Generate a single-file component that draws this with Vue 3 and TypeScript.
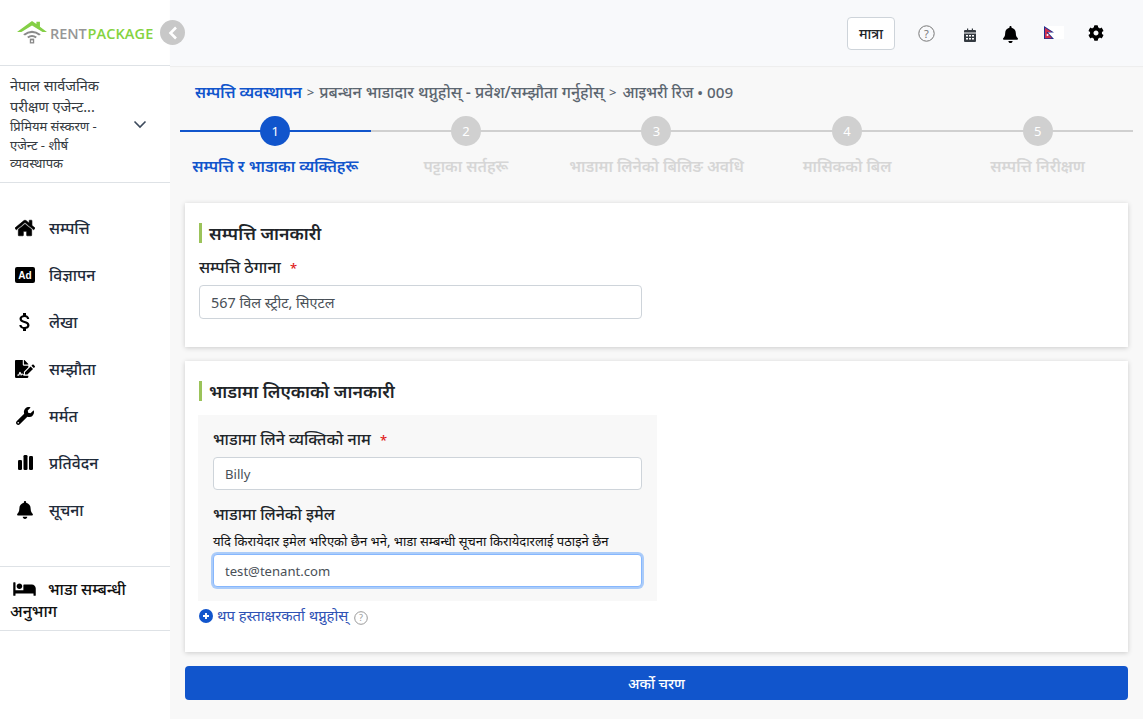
<script setup lang="ts">
const navItems = [
  { label: 'सम्पत्ति', icon: 'home' },
  { label: 'विज्ञापन', icon: 'ad' },
  { label: 'लेखा', icon: 'dollar' },
  { label: 'सम्झौता', icon: 'sign' },
  { label: 'मर्मत', icon: 'wrench' },
  { label: 'प्रतिवेदन', icon: 'chart' },
  { label: 'सूचना', icon: 'bell' },
]
const steps = [
  { n: 1, label: 'सम्पत्ति र भाडाका व्यक्तिहरू', active: true },
  { n: 2, label: 'पट्टाका सर्तहरू', active: false },
  { n: 3, label: 'भाडामा लिनेको बिलिङ अवधि', active: false },
  { n: 4, label: 'मासिकको बिल', active: false },
  { n: 5, label: 'सम्पत्ति निरीक्षण', active: false },
]
const bellPath = 'M224 512c35.32 0 63.97-28.65 63.97-64H160.03c0 35.35 28.65 64 63.97 64zm215.39-149.71c-19.32-20.76-55.47-51.99-55.47-154.29 0-77.7-54.48-139.9-127.94-155.16V32c0-17.67-14.32-32-31.98-32s-31.98 14.33-31.98 32v20.84C118.56 68.1 64.08 130.3 64.08 208c0 102.3-36.15 133.53-55.47 154.29-6 6.45-8.66 14.16-8.61 21.71.11 16.4 12.98 32 32.1 32h383.8c19.12 0 32-15.6 32.1-32 .05-7.55-2.61-15.27-8.61-21.71z'
</script>

<template>
  <div class="app">
    <aside class="sidebar">
      <div class="logo-row">
        <svg class="logo-icon" width="30" height="26" viewBox="0 0 34 27">
          <path d="M0 13.500 L17 1 L22 4.500 V2 H26 V7.500 L34 13.500 H29 L17 6 L5 13.500 Z" fill="#84cf46" />
          <path d="M7 16 Q17 8 27 16 L25 17.500 Q17 12 9 17.500 Z" fill="#8a8a8a" />
          <path d="M11.500 19 Q17 15 22.500 19 L21 20.500 Q17 18 13 20.500 Z" fill="#8a8a8a" />
          <rect x="14.500" y="21" width="5" height="5.500" fill="#8a8a8a" />
          <rect x="16" y="23" width="2" height="2" fill="#fff" />
        </svg>
        <span class="logo-text"><span class="rent">RENT</span><span class="package">PACKAGE</span></span>
      </div>
      <button class="collapse" aria-label="collapse">
        <svg width="10" height="14" viewBox="0 0 10 14"><path d="M8 1.500 L2.500 7 L8 12.500" fill="none" stroke="#fff" stroke-width="2.600" /></svg>
      </button>
      <div class="account">
        <div class="account-text">
          <div class="org">नेपाल सार्वजनिक परीक्षण एजेन्ट...</div>
          <div class="plan">प्रिमियम संस्करण - एजेन्ट - शीर्ष व्यवस्थापक</div>
        </div>
        <svg class="chev" width="14" height="9" viewBox="0 0 14 9"><path d="M1.500 1.500 L7 7 L12.500 1.500" fill="none" stroke="#3c4a5c" stroke-width="1.600" /></svg>
      </div>
      <nav class="nav">
        <div v-for="item in navItems" :key="item.label" class="nav-item">
          <span class="nav-icon">
            <svg v-if="item.icon === 'home'" width="20" height="18" viewBox="0 0 576 512"><path d="M280.37 148.26L96 300.11V464a16 16 0 0 0 16 16l112.06-.29a16 16 0 0 0 15.92-16V368a16 16 0 0 1 16-16h64a16 16 0 0 1 16 16v95.64a16 16 0 0 0 16 16.05L464 480a16 16 0 0 0 16-16V300L295.67 148.26a12.19 12.19 0 0 0-15.3 0zM571.6 251.47L488 182.56V44.05a12 12 0 0 0-12-12h-56a12 12 0 0 0-12 12v72.61L318.47 43a48 48 0 0 0-61 0L4.34 251.47a12 12 0 0 0-1.6 16.9l25.5 31A12 12 0 0 0 45.15 301l235.22-193.74a12.19 12.19 0 0 1 15.3 0L530.9 301a12 12 0 0 0 16.9-1.6l25.5-31a12 12 0 0 0-1.7-16.93z" fill="#000" stroke="#000" stroke-width="18" /></svg>
            <svg v-else-if="item.icon === 'ad'" width="20" height="16" viewBox="0 0 20 16"><rect width="20" height="16" rx="2" fill="#000" /><text x="10" y="11.700" text-anchor="middle" class="ad-text">Ad</text></svg>
            <svg v-else-if="item.icon === 'dollar'" width="24" height="24" viewBox="0 0 24 24"><path d="M11.800 10.900c-2.270-.59-3-1.200-3-2.150 0-1.090 1.010-1.850 2.700-1.850 1.780 0 2.440.85 2.500 2.100h2.210c-.07-1.720-1.120-3.300-3.210-3.810V3h-3v2.160c-1.940.42-3.500 1.680-3.500 3.610 0 2.310 1.910 3.460 4.700 4.130 2.500.6 3 1.480 3 2.410 0 .69-.49 1.790-2.700 1.790-2.060 0-2.870-.92-2.980-2.100h-2.200c.12 2.190 1.760 3.420 3.680 3.830V21h3v-2.150c1.950-.37 3.500-1.500 3.500-3.550 0-2.840-2.430-3.810-4.700-4.400z" fill="#000" /></svg>
            <svg v-else-if="item.icon === 'sign'" width="20" height="18" viewBox="0 0 576 512"><path d="M218.170 424.140c-2.950-5.920-8.090-6.520-10.170-6.520s-7.220.59-10.020 6.190l-7.670 15.340c-6.370 12.780-25.030 11.370-29.480-2.090L144 386.590l-10.610 31.880c-5.890 17.660-22.380 29.530-41 29.530H80c-8.840 0-16-7.160-16-16s7.160-16 16-16h12.390c4.830 0 9.110-3.080 10.640-7.660l18.190-54.640c3.300-9.810 12.440-16.410 22.780-16.410s19.480 6.590 22.770 16.410l13.880 41.640c19.750-16.190 54.060-9.700 66 14.160 1.890 3.780 5.490 5.950 9.360 6.260v-82.120l128-127.090V160H248c-13.200 0-24-10.800-24-24V0H24C10.700 0 0 10.700 0 24v464c0 13.300 10.700 24 24 24h336c13.300 0 24-10.700 24-24v-40l-128-.11c-16.120-.31-30.580-9.280-37.830-23.750zM384 121.900c0-6.300-2.500-12.400-7-16.900L279.100 7c-4.500-4.500-10.600-7-17-7H256v128h128v-6.100zm-96 225.060V416h68.990l161.680-162.780-67.880-67.880L288 346.960zm280.540-179.630l-31.870-31.870c-9.940-9.940-26.070-9.940-36.010 0l-27.250 27.250 67.880 67.880 27.250-27.250c9.950-9.950 9.950-26.070 0-36.010z" fill="#000" /></svg>
            <svg v-else-if="item.icon === 'wrench'" width="18" height="18" viewBox="0 0 512 512"><path d="M507.730 109.100c-2.240-9.030-13.540-12.090-20.120-5.510l-74.360 74.360-67.880-11.310-11.310-67.880 74.360-74.360c6.620-6.620 3.430-17.900-5.660-20.160-47.380-11.740-99.550.91-136.580 37.930-39.640 39.640-50.550 97.100-34.050 147.200L18.740 402.760c-24.990 24.990-24.990 65.510 0 90.500 24.990 24.990 65.510 24.990 90.500 0l213.210-213.210c50.120 16.710 107.470 5.680 147.370-34.220 37.070-37.070 49.700-89.320 37.910-136.730zM64 472c-13.250 0-24-10.750-24-24 0-13.260 10.750-24 24-24s24 10.740 24 24c0 13.250-10.750 24-24 24z" fill="#000" /></svg>
            <svg v-else-if="item.icon === 'chart'" width="15" height="15" viewBox="0 0 15 15"><rect x="0" y="5" width="4" height="10" rx="1.300" fill="#000" /><rect x="5.500" y="0" width="4" height="15" rx="1.300" fill="#000" /><rect x="11" y="1" width="4" height="14" rx="1.300" fill="#000" /></svg>
            <svg v-else width="16" height="18" viewBox="0 0 448 512"><path :d="bellPath" fill="#000" /></svg>
          </span>
          <span class="nav-label">{{ item.label }}</span>
        </div>
      </nav>
      <div class="rental">
        <svg class="bed" width="23" height="18" viewBox="0 0 640 512"><path d="M176 256c44.110 0 80-35.890 80-80s-35.890-80-80-80-80 35.890-80 80 35.890 80 80 80zm352-128H304c-8.840 0-16 7.160-16 16v144H64V80c0-8.840-7.160-16-16-16H16C7.160 64 0 71.160 0 80v352c0 8.840 7.160 16 16 16h32c8.840 0 16-7.160 16-16v-48h512v48c0 8.840 7.160 16 16 16h32c8.840 0 16-7.160 16-16V240c0-61.860-50.140-112-112-112z" fill="#000" /></svg>
        <span class="rental-label">भाडा सम्बन्धी अनुभाग</span>
      </div>
    </aside>

    <main class="main">
      <header class="topbar">
        <button class="trip">मात्रा</button>
        <svg class="help-top" width="17" height="17" viewBox="0 0 17 17"><circle cx="8.500" cy="8.500" r="7.700" fill="none" stroke="#777" stroke-width="1" /><text x="8.500" y="12.500" text-anchor="middle" class="q">?</text></svg>
        <svg class="cal" width="12" height="14" viewBox="0 0 12 14"><path d="M1 2 H3 V0.500 H4.200 V2 H7.800 V0.500 H9 V2 H11 A1 1 0 0 1 12 3 V4.500 H0 V3 A1 1 0 0 1 1 2 Z M0 5.500 H12 V13 A1 1 0 0 1 11 14 H1 A1 1 0 0 1 0 13 Z" fill="#343a40" /><path d="M2 7 H4 V8.500 H2 Z M5 7 H7 V8.500 H5 Z M8 7 H10 V8.500 H8 Z M2 10 H4 V11.500 H2 Z M5 10 H7 V11.500 H5 Z M8 10 H10 V11.500 H8 Z" fill="#fff" /></svg>
        <svg class="bell-top" width="15" height="17" viewBox="0 0 448 512"><path :d="bellPath" fill="#000" /></svg>
        <svg class="flag" width="20" height="13" viewBox="0 0 20 13"><rect width="20" height="13" fill="#fff" /><path d="M0 0 L10 6.500 H4 L10 13 H0 Z" fill="#1f2f8f" /><path d="M1 1.800 L7.500 6 H2.500 L8 12.200 H1 Z" fill="#cf2f4f" /><circle cx="3.500" cy="9" r="1" fill="#fff" /></svg>
        <svg class="gear" width="16" height="16" viewBox="0 0 512 512"><path d="M487.400 315.700l-42.600-24.600c4.300-23.200 4.300-47 0-70.200l42.600-24.600c4.900-2.800 7.100-8.600 5.500-14-11.100-35.600-30-67.800-54.700-94.600-3.800-4.100-10-5.100-14.800-2.300L380.800 110c-17.900-15.400-38.500-27.300-60.800-35.100V25.800c0-5.600-3.900-10.500-9.400-11.700-36.700-8.200-74.300-7.800-109.200 0-5.500 1.200-9.400 6.100-9.400 11.700V75c-22.200 7.900-42.800 19.800-60.800 35.100L88.700 85.500c-4.900-2.800-11-1.900-14.800 2.300-24.700 26.700-43.600 58.900-54.700 94.600-1.700 5.400.6 11.200 5.500 14L67.300 221c-4.300 23.200-4.300 47 0 70.200l-42.600 24.600c-4.900 2.800-7.100 8.600-5.500 14 11.100 35.600 30 67.800 54.700 94.600 3.800 4.100 10 5.100 14.800 2.300l42.600-24.600c17.900 15.400 38.500 27.300 60.800 35.100v49.200c0 5.600 3.900 10.500 9.400 11.700 36.700 8.200 74.300 7.800 109.200 0 5.500-1.200 9.400-6.100 9.400-11.700v-49.200c22.200-7.900 42.800-19.800 60.800-35.100l42.600 24.600c4.900 2.800 11 1.900 14.800-2.300 24.700-26.700 43.600-58.900 54.700-94.600 1.500-5.500-.7-11.300-5.600-14.100zM256 336c-44.100 0-80-35.900-80-80s35.900-80 80-80 80 35.900 80 80-35.900 80-80 80z" fill="#000" /></svg>
      </header>

      <div class="content">
        <div class="crumbs"><span class="crumb-link">सम्पत्ति व्यवस्थापन</span><span class="sep">&gt;</span><span class="crumb-mid">प्रबन्धन भाडादार थप्नुहोस् - प्रवेश/सम्झौता गर्नुहोस्</span><span class="sep">&gt;</span><span class="crumb-end">आइभरी रिज • 009</span></div>

        <div class="stepper">
          <div v-for="s in steps" :key="s.n" class="step" :class="{ active: s.active }">
            <div class="track"><span class="dot">{{ s.n }}</span></div>
            <div class="step-label">{{ s.label }}</div>
          </div>
        </div>

        <section class="card card-one">
          <h2 class="title">सम्पत्ति जानकारी</h2>
          <label class="field-label">सम्पत्ति ठेगाना <span class="req">*</span></label>
          <input class="input wide" value="567 विल स्ट्रीट, सिएटल" />
        </section>

        <section class="card card-two">
          <h2 class="title">भाडामा लिएकाको जानकारी</h2>
          <div class="panel">
            <label class="field-label">भाडामा लिने व्यक्तिको नाम <span class="req">*</span></label>
            <input class="input" value="Billy" />
            <label class="field-label second">भाडामा लिनेको इमेल</label>
            <div class="hint">यदि किरायेदार इमेल भरिएको छैन भने, भाडा सम्बन्धी सूचना किरायेदारलाई पठाइने छैन</div>
            <input class="input focused" value="test@tenant.com" />
          </div>
          <div class="add-row">
            <svg width="14" height="14" viewBox="0 0 14 14"><circle cx="7" cy="7" r="7" fill="#1155cc" /><path d="M7 4 V10 M4 7 H10" stroke="#fff" stroke-width="1.900" /></svg>
            <span class="add-text">थप हस्ताक्षरकर्ता थप्नुहोस्</span>
            <svg class="help-small" width="14" height="14" viewBox="0 0 14 14"><circle cx="7" cy="7" r="6.300" fill="none" stroke="#999" stroke-width="1" /><text x="7" y="10.300" text-anchor="middle" class="q small">?</text></svg>
          </div>
        </section>

        <button class="next">अर्को चरण</button>
      </div>
    </main>
  </div>
</template>

<style>
html, body { margin: 0; background: #f8f8f8; }
</style>

<style scoped>
.app {
  display: flex;
  width: 1143px;
  height: 719px;
  overflow: hidden;
  font-family: "Noto Sans", "Open Sans", "Liberation Sans", sans-serif;
  color: #212529;
  position: relative;
}
.sidebar {
  width: 170px;
  flex: none;
  background: #fff;
  display: flex;
  flex-direction: column;
}
.logo-row {
  height: 66px;
  box-sizing: border-box;
  border-bottom: 1px solid #dee2e6;
  display: flex;
  align-items: flex-start;
  padding: 19px 0 0 17px;
}
.logo-text { font-family: "Open Sans", sans-serif; font-size: 14.500px; font-weight: 600; margin: 5px 0 0 3px; letter-spacing: -0.100px; white-space: nowrap; }
.rent { color: #969696; margin-right: 1px; }
.package { color: #84d340; letter-spacing: 0.100px; }
.collapse {
  position: absolute;
  left: 160px;
  top: 20px;
  width: 25px;
  height: 25px;
  border: 0;
  border-radius: 50%;
  background: #c8c8c8;
  padding: 0;
  display: flex;
  align-items: center;
  justify-content: center;
}
.account {
  height: 117px;
  box-sizing: border-box;
  border-bottom: 1px solid #dee2e6;
  padding: 0 23px 0 10px;
  display: flex;
  align-items: center;
  gap: 2px;
}
.account-text { width: 122px; color: #343a40; }
.org { font-size: 14.500px; line-height: 21px; }
.plan { font-size: 13px; line-height: 18.500px; width: 100px; }
.chev { flex: none; }
.nav { padding-top: 21px; height: 383px; box-sizing: border-box; }
.nav-item { height: 47px; display: flex; align-items: center; padding-left: 15px; }
.nav-icon { width: 20px; margin-right: 14px; display: flex; align-items: center; justify-content: center; overflow: visible; }
.nav-icon svg { flex: none; }
.ad-text { font: bold 10px "Liberation Sans", sans-serif; fill: #fff; }
.nav-label { font-size: 15.800px; font-weight: 500; color: #1f2b3a; }
.rental {
  height: 65px;
  box-sizing: border-box;
  border-top: 1px solid #dee2e6;
  border-bottom: 1px solid #dee2e6;
  padding: 11px 10px 0 10px;
  font-size: 16px;
  line-height: 22px;
  font-weight: 500;
  color: #111;
}
.bed { margin-right: 12px; vertical-align: -3px; margin-left: 3px; }
.main { flex: 1; min-width: 0; background: #f8f8f8; display: flex; flex-direction: column; }
.topbar {
  height: 66px;
  flex: none;
  box-sizing: border-box;
  background: #f8f9fb;
  display: flex;
  align-items: center;
  padding-left: 677px;
  box-shadow: 0 1px 1px rgba(0, 0, 0, 0.04);
}
.trip {
  width: 48px;
  height: 33px;
  border: 1px solid #ced4da;
  border-radius: 4px;
  background: #fff;
  color: #212529;
  font: 500 14px "Noto Sans", sans-serif;
  padding: 0;
}
.help-top { margin-left: 23px; }
.cal { margin-left: 29px; margin-top: 3px; }
.bell-top { margin-left: 27px; margin-top: 3px; }
.flag { margin-left: 26px; margin-top: -1px; }
.gear { margin-left: 24px; margin-top: -1px; }
.q { font: 11px "Noto Sans", sans-serif; fill: #777; }
.q.small { font-size: 9px; fill: #999; }
.content { padding: 0 15px; }
.crumbs { margin-top: 15px; padding-left: 10px; height: 22px; line-height: 22px; font-size: 15.200px; font-weight: 500; color: #5c6670; white-space: nowrap; display: flex; }
.crumb-link { color: #1155cc; font-weight: 600; font-size: 15.300px; }
.crumb-mid { font-size: 15.900px; margin-left: 1px; }
.crumb-end { margin-left: 2px; }
.sep { font-size: 13px; margin: 0 4px 0 5px; }
.stepper { display: flex; margin: 13px -5px 0; height: 68px; }
.step { flex: 1; min-width: 0; text-align: center; }
.track { height: 30px; display: flex; align-items: center; justify-content: center; position: relative; }
.track::before { content: ""; position: absolute; left: 0; right: 0; top: 14px; height: 2px; background: #d0d0d0; }
.step.active .track::before { background: #1155cc; }
.dot {
  position: relative;
  width: 30px;
  height: 30px;
  border-radius: 50%;
  background: #d0d0d0;
  color: #fff;
  font-size: 13px;
  line-height: 30px;
}
.step.active .dot { background: #1155cc; }
.step-label { margin-top: 9px; font-size: 15.700px; font-weight: 600; line-height: 22px; color: #d6d6d6; white-space: nowrap; }
.step.active .step-label { color: #1155cc; }
.card { background: #fff; box-shadow: 0 1px 5px rgba(0, 0, 0, 0.18); box-sizing: border-box; padding: 20px 14px 0; }
.card-one { margin-top: 19px; height: 144px; }
.card-two { margin-top: 14px; height: 291px; }
.title {
  margin: 0;
  border-left: 3px solid #9bc35a;
  padding-left: 7px;
  height: 20px;
  line-height: 20px;
  font-size: 17.700px;
  font-weight: 600;
  color: #212529;
}
.field-label { display: block; font-size: 16px; font-weight: 500; line-height: 22px; color: #212529; }
.card-one .field-label { margin-top: 13px; }
.req { color: #e02020; margin-left: 5px; font-size: 13px; }
.input {
  display: block;
  box-sizing: border-box;
  width: 429px;
  height: 33px;
  border: 1px solid #ced4da;
  border-radius: 4px;
  padding: 0 11px;
  background: #fff;
  color: #495057;
  font: 13.100px "Noto Sans", "Open Sans", sans-serif;
  outline: none;
}
.input.wide { width: 443px; height: 34px; margin-top: 6px; font-size: 14.400px; }
.panel { margin: 14px 0 0 -1px; width: 459px; height: 186px; box-sizing: border-box; background: #f8f8f8; padding: 14px 15px 0; }
.panel .field-label:first-child { margin-top: -1px; }
.panel .input { margin-top: 6px; }
.field-label.second { margin-top: 13px; }
.hint { font-size: 13px; line-height: 18px; margin-top: 7px; color: #111; white-space: nowrap; }
.panel .input.focused { margin-top: 4px; border-color: #86b7fe; box-shadow: 0 0 0 2px rgba(120, 175, 250, 0.6); }
.add-row { display: flex; align-items: center; margin-top: 5px; }
.add-text { margin: -2px 0 0 4px; font-size: 14.800px; line-height: 20px; color: #2f52b5; }
.help-small { margin: 5px 0 0 6px; }
.next {
  display: block;
  width: 100%;
  height: 34px;
  margin-top: 14px;
  border: 0;
  border-radius: 4px;
  background: #1155cc;
  color: #fff;
  font: 500 14.500px "Noto Sans", sans-serif;
}
</style>
